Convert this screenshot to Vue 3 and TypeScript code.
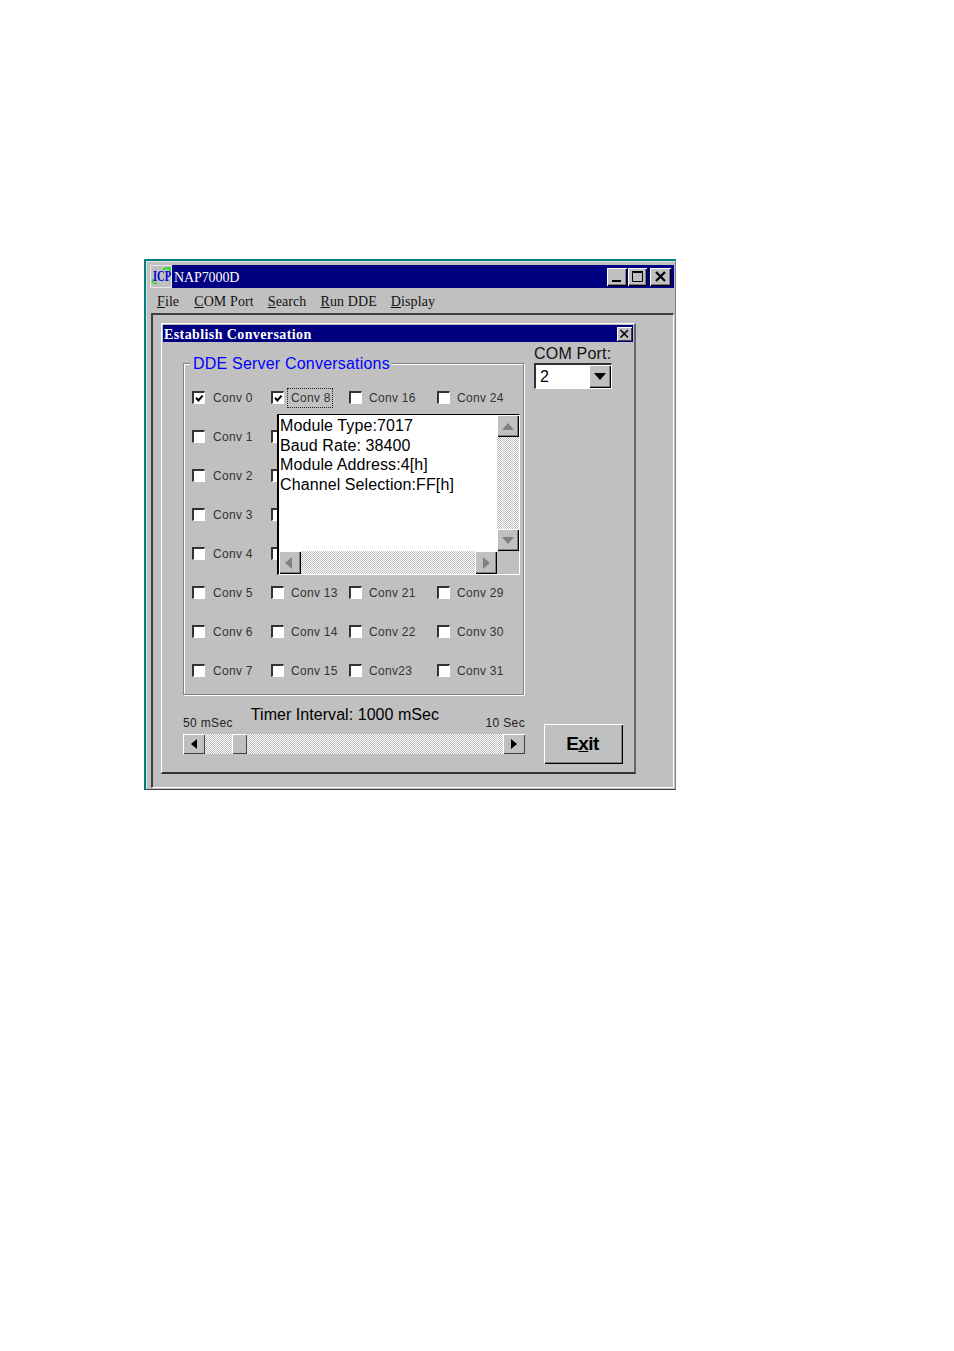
<script setup lang="ts">
const menus = [
  { key: 'F', rest: 'ile' },
  { key: 'C', rest: 'OM Port' },
  { key: 'S', rest: 'earch' },
  { key: 'R', rest: 'un DDE' },
  { key: 'D', rest: 'isplay' },
]
const checked = [0, 8]
const labelFor = (n: number): string => (n === 23 ? 'Conv23' : `Conv ${n}`)
// Rows 1-4 of columns 1-3 lie behind the list box, so their captions never show.
const covered = (n: number): boolean => n >= 8 && n % 8 >= 1 && n % 8 <= 4
const convs = Array.from({ length: 32 }, (_, n) => ({
  n,
  label: covered(n) ? '' : labelFor(n),
  checked: checked.includes(n),
  focus: n === 8,
  first: n < 8,
}))
const lines = ['Module Type:7017', 'Baud Rate: 38400', 'Module Address:4[h]', 'Channel Selection:FF[h]']
</script>

<template>
  <div class="page">
    <div class="window">
      <div class="titlebar">
        <svg class="appicon" width="22" height="23" viewBox="0 0 22 23">
          <rect x="0.5" y="0.5" width="21" height="22" fill="#c0c0c0" stroke="#e8e8e8" />
          <path d="M2.5 14 Q2 19 7 18.5 M13 5 Q14 3 20 3 L20 7" fill="none" stroke="#00e000" stroke-width="1.4" />
          <text x="3" y="11.5" transform="scale(1 1.35)" class="icontext">ICP</text>
        </svg>
        <span class="apptitle">NAP7000D</span>
        <div class="capbtns">
          <button class="capbtn">
            <svg width="20" height="18" viewBox="0 0 20 18"><rect x="5" y="12" width="9" height="2" fill="#000" /></svg>
          </button>
          <button class="capbtn">
            <svg width="19" height="18" viewBox="0 0 19 18"><path d="M4.5 4.5h10v9h-10z M4 3.5h11" fill="none" stroke="#000" /></svg>
          </button>
          <button class="capbtn close">
            <svg width="21" height="18" viewBox="0 0 21 18"><path d="M6 4 L15 13 M15 4 L6 13" stroke="#000" stroke-width="2.2" /></svg>
          </button>
        </div>
      </div>

      <nav class="menubar">
        <span v-for="m in menus" :key="m.key" class="menuitem"><u>{{ m.key }}</u>{{ m.rest }}</span>
      </nav>

      <div class="client">
        <div class="dialog">
          <div class="dlgtitle">
            <span class="dlgtext">Establish Conversation</span>
            <button class="dlgclose">
              <svg width="15" height="14" viewBox="0 0 15 14"><path d="M3.5 3 L11 10.5 M11 3 L3.5 10.5" stroke="#000" stroke-width="1.5" /></svg>
            </button>
          </div>

          <div class="dlgbody">
            <div class="leftcol">
              <section class="group">
                <h2 class="legend">DDE Server Conversations</h2>
                <div class="convgrid">
                  <label v-for="c in convs" :key="c.n" class="conv">
                    <span class="box">
                      <svg v-if="c.checked" width="9" height="9" viewBox="0 0 9 9"><path d="M1 3.8 L3.4 6.4 L7.6 1.6" fill="none" stroke="#000" stroke-width="2" /></svg>
                    </span>
                    <span v-if="c.label" class="convlabel" :class="{ focus: c.focus, first: c.first }">{{ c.label }}</span>
                  </label>
                </div>

                <div class="listbox">
                  <div class="listtext">
                    <div v-for="l in lines" :key="l">{{ l }}</div>
                  </div>
                  <div class="vscroll">
                    <button class="sbtn tall">
                      <svg width="12" height="7" viewBox="0 0 12 7"><path d="M6 0 L12 7 L0 7Z" fill="#808080" /></svg>
                    </button>
                    <div class="track"></div>
                    <button class="sbtn tall">
                      <svg width="12" height="7" viewBox="0 0 12 7"><path d="M0 0 L12 0 L6 7Z" fill="#808080" /></svg>
                    </button>
                  </div>
                  <div class="hscroll">
                    <button class="sbtn back">
                      <svg width="7" height="12" viewBox="0 0 7 12"><path d="M7 0 L7 12 L0 6Z" fill="#808080" /></svg>
                    </button>
                    <div class="track"></div>
                    <button class="sbtn">
                      <svg width="7" height="12" viewBox="0 0 7 12"><path d="M0 0 L7 6 L0 12Z" fill="#808080" /></svg>
                    </button>
                  </div>
                </div>
              </section>

              <div class="timerlabels">
                <span class="small">50 mSec</span>
                <span class="timer">Timer Interval: 1000 mSec</span>
                <span class="small end">10 Sec</span>
              </div>
              <div class="slider">
                <button class="slbtn">
                  <svg width="6" height="10" viewBox="0 0 6 10"><path d="M6 0 L6 10 L0 5Z" fill="#000" /></svg>
                </button>
                <div class="track short"></div>
                <div class="thumb"></div>
                <div class="track"></div>
                <button class="slbtn">
                  <svg width="6" height="10" viewBox="0 0 6 10"><path d="M0 0 L6 5 L0 10Z" fill="#000" /></svg>
                </button>
              </div>
            </div>

            <div class="rightcol">
              <div class="comlabel">COM Port:</div>
              <div class="combo">
                <span class="comboval">2</span>
                <button class="combobtn">
                  <svg width="12" height="7" viewBox="0 0 12 7"><path d="M0 0 L12 0 L6 7Z" fill="#000" /></svg>
                </button>
              </div>
              <button class="exit">E<u>x</u>it</button>
            </div>
          </div>
        </div>
      </div>
    </div>
  </div>
</template>

<style>
html, body { background: #fff; }
</style>

<style scoped>
.page {
  width: 954px;
  height: 1351px;
  box-sizing: border-box;
  padding: 259px 0 0 144px;
  background: #fff;
  font-family: "Liberation Sans", Arial, sans-serif;
}
button { padding: 0; margin: 0; font: inherit; }
.window {
  width: 532px;
  height: 531px;
  box-sizing: border-box;
  background: #c0c0c0;
  border-top: 2px solid #008080;
  border-left: 2px solid #008080;
  border-right: 1px solid #808080;
  border-bottom: 1px solid #404040;
  padding: 4px 1px 0 4px;
  box-shadow: inset 1px 1px 0 #dfdfdf;
}
.titlebar {
  height: 23px;
  background: #000080;
  display: flex;
  align-items: center;
  color: #fff;
}
.appicon { flex: none; }
.icontext {
  font-family: "Liberation Serif", serif;
  font-weight: 700;
  font-size: 10.5px;
  fill: #0000d8;
}
.apptitle {
  margin-left: 2px;
  padding-top: 2px;
  font-family: "Liberation Serif", serif;
  font-size: 14px;
  letter-spacing: -0.1px;
}
.capbtns {
  margin-left: auto;
  margin-right: 3px;
  display: flex;
  gap: 1px;
}
.capbtn {
  display: flex;
  background: #c0c0c0;
  border: 0;
  box-shadow: inset 1px 1px 0 #fff, inset -1px -1px 0 #000, inset -2px -2px 0 #808080;
}
.capbtn.close { margin-left: 2px; }
.menubar {
  height: 25px;
  box-sizing: border-box;
  margin-left: 1px;
  padding: 2px 0 0 6px;
  display: flex;
  align-items: center;
  gap: 14px;
  font-family: "Liberation Serif", serif;
  font-size: 14px;
  letter-spacing: 0.1px;
  color: #111;
}
.menuitem:first-child { margin-right: 1px; }
.client {
  height: 475px;
  margin-left: 1px;
  box-sizing: border-box;
  border-top: 2px solid #404040;
  border-left: 2px solid #404040;
  border-right: 1px solid #fff;
  border-bottom: 1px solid #fff;
  padding: 8px 0 0 8px;
}
.dialog {
  width: 475px;
  height: 451px;
  box-sizing: border-box;
  border-top: 1px solid #fff;
  border-left: 1px solid #fff;
  border-right: 2px solid #666;
  border-bottom: 2px solid #333;
  padding: 1px 0 0 1px;
}
.dlgtitle {
  height: 17px;
  background: #000080;
  color: #fff;
  display: flex;
  align-items: center;
  justify-content: space-between;
  padding-left: 1px;
  margin-right: 1px;
  font-family: "Liberation Serif", serif;
  font-weight: 700;
  font-size: 14px;
  letter-spacing: 0.4px;
}
.dlgtext { padding-top: 2px; }
.dlgclose {
  display: flex;
  margin-right: 1px;
  background: #c0c0c0;
  border: 0;
  box-shadow: inset 1px 1px 0 #fff, inset -1px -1px 0 #404040;
}
.dlgbody {
  display: flex;
  align-items: flex-start;
  padding: 3px 0 0 20px;
  gap: 9px;
}
.leftcol {
  width: 342px;
  margin-top: 18px;
}
.group {
  position: relative;
  width: 341px;
  height: 332px;
  margin-bottom: 1px;
  box-sizing: border-box;
  border: 1px solid #808080;
  box-shadow: 1px 1px 0 #fff, inset 1px 1px 0 #fff;
  padding: 14px 0 0 8px;
}
.legend {
  position: absolute;
  left: 6px;
  top: -9px;
  margin: 0;
  padding: 0 2px 0 3px;
  background: #c0c0c0;
  color: #0000ff;
  font-size: 16px;
  line-height: 18px;
  font-weight: 400;
  letter-spacing: 0.2px;
}
.convgrid {
  display: grid;
  grid-auto-flow: column;
  grid-template-rows: repeat(8, 39px);
  grid-template-columns: 79px 78px 88px 88px;
}
.conv {
  display: flex;
  align-items: center;
  font-size: 12px;
  color: #333;
  letter-spacing: 0.3px;
}
.box {
  flex: none;
  width: 13px;
  height: 13px;
  box-sizing: border-box;
  background: #fff;
  border-top: 2px solid #333;
  border-left: 2px solid #333;
  border-right: 1px solid #fff;
  border-bottom: 1px solid #fff;
  display: flex;
  align-items: center;
  justify-content: center;
}
.convlabel {
  margin-left: 6px;
  padding: 2px 1px 2px 0;
  border: 1px solid transparent;
}
.convlabel.first { margin-left: 7px; }
.convlabel.focus {
  margin-left: 3px;
  padding-left: 3px;
  border: 1px dotted #222;
}
.listbox {
  position: absolute;
  left: 93px;
  top: 50px;
  width: 243px;
  height: 161px;
  box-sizing: border-box;
  background: #c0c0c0;
  border-top: 1px solid #000;
  border-left: 2px solid #000;
  border-right: 1px solid #fff;
  border-bottom: 1px solid #fff;
  display: grid;
  grid-template-columns: 218px 22px;
  grid-template-rows: 136px 23px;
}
.listtext {
  background: #fff;
  padding: 1px 0 0 1px;
  font-size: 16px;
  line-height: 19.5px;
  letter-spacing: 0.1px;
  color: #000;
  white-space: nowrap;
  overflow: hidden;
}
.vscroll { display: flex; flex-direction: column; }
.hscroll { display: flex; }
.track {
  flex: 1;
  background-color: #c0c0c0;
  background-image: conic-gradient(#fff 25%, #c0c0c0 0 50%, #fff 0 75%, #c0c0c0 0);
  background-size: 2px 2px;
}
.sbtn {
  flex: none;
  box-sizing: border-box;
  width: 22px;
  height: 23px;
  display: flex;
  align-items: center;
  justify-content: center;
  background: #c0c0c0;
  border: 0;
  box-shadow: inset 1px 1px 0 #fff, inset -1px -1px 0 #000, inset -2px -2px 0 #808080;
}
.sbtn.tall { height: 22px; }
.sbtn.back { padding-right: 4px; }
.timerlabels {
  height: 38px;
  display: flex;
  align-items: flex-end;
  padding-bottom: 3px;
  box-sizing: border-box;
  color: #222;
}
.small { font-size: 12px; letter-spacing: 0.35px; line-height: 15px; }
.small.end { margin-left: auto; }
.timer {
  margin-left: 18px;
  font-size: 16px;
  line-height: 18px;
  margin-bottom: 7px;
  letter-spacing: 0.05px;
  color: #000;
}
.slider { display: flex; height: 20px; }
.slider .track.short { flex: none; width: 27px; }
.slbtn {
  flex: none;
  width: 22px;
  height: 20px;
  display: flex;
  align-items: center;
  justify-content: center;
  background: #c0c0c0;
  border: 0;
  box-shadow: inset 1px 1px 0 #fff, inset -1px -1px 0 #404040;
}
.thumb {
  flex: none;
  width: 15px;
  background: #c0c0c0;
  box-shadow: inset 1px 1px 0 #fff, inset -1px -1px 0 #404040;
}
.rightcol { width: 92px; }
.comlabel {
  font-size: 16px;
  line-height: 18px;
  letter-spacing: 0.2px;
  color: #111;
}
.combo {
  width: 78px;
  height: 26px;
  box-sizing: border-box;
  background: #fff;
  border-top: 2px solid #333;
  border-left: 2px solid #333;
  border-right: 1px solid #fff;
  border-bottom: 1px solid #fff;
  display: flex;
  align-items: stretch;
}
.comboval {
  flex: 1;
  padding-left: 4px;
  font-size: 16px;
  line-height: 23px;
  color: #000;
}
.combobtn {
  width: 22px;
  display: flex;
  align-items: center;
  justify-content: center;
  background: #c0c0c0;
  border: 0;
  box-shadow: inset 1px 1px 0 #fff, inset -1px -1px 0 #000, inset -2px -2px 0 #808080;
}
.exit {
  display: block;
  width: 79px;
  height: 40px;
  margin: 335px 0 0 10px;
  padding-right: 2px;
  background: #c0c0c0;
  border: 0;
  box-shadow: inset 1px 1px 0 #fff, inset -1px -1px 0 #000, inset -2px -2px 0 #808080;
  font-size: 19px;
  font-weight: 700;
  letter-spacing: -0.6px;
  color: #000;
}
</style>
